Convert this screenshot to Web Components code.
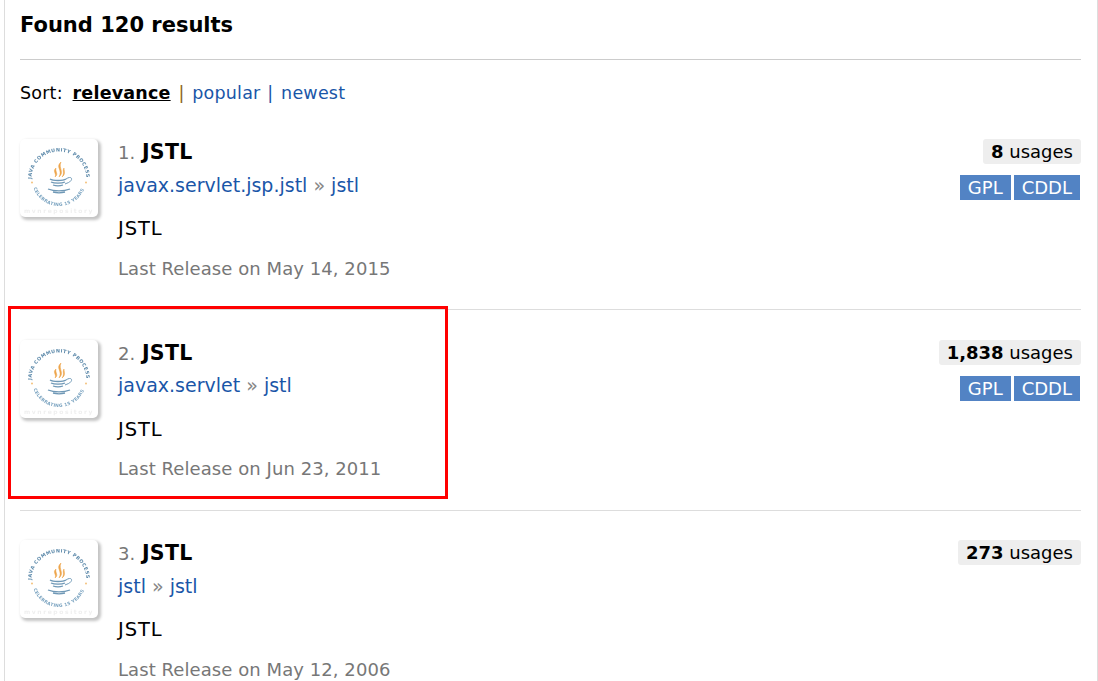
<!DOCTYPE html>
<html><head><meta charset="utf-8"><style>
html,body{margin:0;height:681px;overflow:hidden;background:#fff}
body{font-family:"DejaVu Sans",Verdana,sans-serif;color:#000}
</style></head><body>
<mvn-page>
<span slot="title">Found 120 results</span>
<mvn-result num="1" g1="javax.servlet.jsp.jstl" g2="jstl" date="May 14, 2015" usages="8" licenses="GPL,CDDL"></mvn-result>
<mvn-result num="2" g1="javax.servlet" g2="jstl" date="Jun 23, 2011" usages="1,838" licenses="GPL,CDDL"></mvn-result>
<mvn-result num="3" g1="jstl" g2="jstl" date="May 12, 2006" usages="273" licenses=""></mvn-result>
</mvn-page>
<script>
class MvnPage extends HTMLElement{constructor(){super();this.attachShadow({mode:'open'}).innerHTML=`<style>
:host{display:block;position:relative;height:681px;overflow:hidden;box-sizing:border-box;margin:0 0 0 4px;width:1094px;border-left:1px solid #ddd;border-right:1px solid #ddd;padding:0 16px 0 15px}
h2{margin:0;font-size:21px;line-height:24px;padding-top:13px;height:59px;box-sizing:border-box;font-weight:700}
hr{border:0;border-top:1px solid #ccc;margin:0}
.sort{font-size:17.500px;line-height:22px;margin-top:22px;height:57px;letter-spacing:.2px;word-spacing:2px}
.sort b{text-decoration:underline;color:#000;margin-left:2px}
.sort i{font-style:normal;color:#8a6420}.sort a{color:#1a56a8}.sort i.b{color:#1a56a8;margin-left:-1px}
.mark{position:absolute;left:3px;top:306px;width:440px;height:192.500px;box-sizing:border-box;border:3px solid #f00}
</style><h2><slot name="title"></slot></h2><hr>
<div class="sort">Sort: <b>relevance</b> <i>|</i> <a>popular</a> <i class="b">|</i> <a>newest</a></div>
<slot></slot><div class="mark"></div>`}}
customElements.define('mvn-page',MvnPage);
class JcpLogo extends HTMLElement{constructor(){super();const id='c'+Math.random().toString(36).slice(2);this.attachShadow({mode:'open'}).innerHTML=`<style>
:host{display:block;width:78px;height:78px;flex:none;background:#fff;border-radius:5px;box-shadow:2px 2px 3px 1px #c4c4c4}
svg{display:block;filter:blur(.45px)}
text{font-family:"DejaVu Sans",sans-serif;font-weight:700}
</style><svg width="78" height="78" viewBox="0 0 78 78">
<defs><path id="${id}a" d="M11.500 40A27.500 27.500 0 0 1 66.500 40"/><path id="${id}b" d="M13.200 48A27 27 0 0 0 64.800 48"/></defs>
<text font-size="4.800" fill="#5c89aa" letter-spacing=".5"><textPath href="#${id}a">JAVA COMMUNITY PROCESS</textPath></text>
<text font-size="4.400" fill="#7aa3c0" letter-spacing=".3"><textPath href="#${id}b" startOffset="1">CELEBRATING 15 YEARS</textPath></text>
<circle cx="12" cy="43.500" r="1" fill="#f4c27c"/><circle cx="66" cy="43.500" r="1" fill="#f4c27c"/>
<path d="M41 23c-6 5 2 8-2 15 6-5-1-9 2-15zM36 29c-4 3 1 6-1 9 4-3 0-5 1-9zM44 29c-2 3 1 5-2 9 4-3 2-6 2-9z" fill="#eda44a" stroke="#eda44a" stroke-width=".5"/>
<path d="M30 40c3 2 13 2 16 0M31 43c3 1.500 11 1.500 14 0M33 46c3 1 7 1 10 0M28 50c6 2.500 16 2.500 22 0M33 53c3 .8 9 .8 12 0" fill="none" stroke="#6f98b6" stroke-width="1.300"/>
<path d="M46 40c4-3 7-1 5 1.500s-3 2-6 3.500" fill="none" stroke="#6f98b6" stroke-width="1"/>
<text x="39" y="74" text-anchor="middle" font-size="6" fill="#efefef" letter-spacing="1.600">mvnrepository</text>
</svg>`}}
customElements.define('jcp-logo',JcpLogo);
class MvnResult extends HTMLElement{constructor(){super();const a=n=>this.getAttribute(n)||'';
const lic=a('licenses')?a('licenses').split(',').map(l=>`<span class="lic">${l}</span>`).join(''):'';
this.attachShadow({mode:'open'}).innerHTML=`<style>
:host{display:flex;height:200.500px;box-sizing:border-box;padding-top:29.500px;border-top:1px solid #ddd;gap:20px}
:host(:first-of-type){height:170px;padding-top:0;border-top:0}
.body{flex:1;line-height:24px}
.t{font-size:18px;line-height:26px;color:#777;height:32.500px}
.t b{color:#000;font-size:20.500px;letter-spacing:.3px;margin-left:1px}
.g{font-size:19px;height:33px;line-height:26px;color:#888}.g a{color:#1a56a8}
.d{font-size:19.500px;letter-spacing:.9px;margin-top:12.500px;height:40.500px;line-height:24px}
.r{font-size:18px;line-height:22px;color:#777;white-space:nowrap;letter-spacing:.07px}
.side{display:flex;flex-direction:column;align-items:flex-end}
.u{background:#eee;border-radius:3px;font-size:18px;line-height:26px;height:25px;padding:0 8px;white-space:nowrap}
.ls{display:flex;gap:3px;margin-top:11px;margin-right:1px}
.lic{background:#5283c4;color:#fff;font-size:18px;line-height:25px;height:25px;padding:0 8px}
</style><jcp-logo></jcp-logo>
<div class="body"><div class="t">${a('num')}. <b>JSTL</b></div>
<div class="g"><a>${a('g1')}</a> » <a>${a('g2')}</a></div>
<div class="d">JSTL</div><div class="r">Last Release on ${a('date')}</div></div>
<div class="side"><div class="u"><b>${a('usages')}</b> usages</div><div class="ls">${lic}</div></div>`}}
customElements.define('mvn-result',MvnResult);
</script></body></html>
